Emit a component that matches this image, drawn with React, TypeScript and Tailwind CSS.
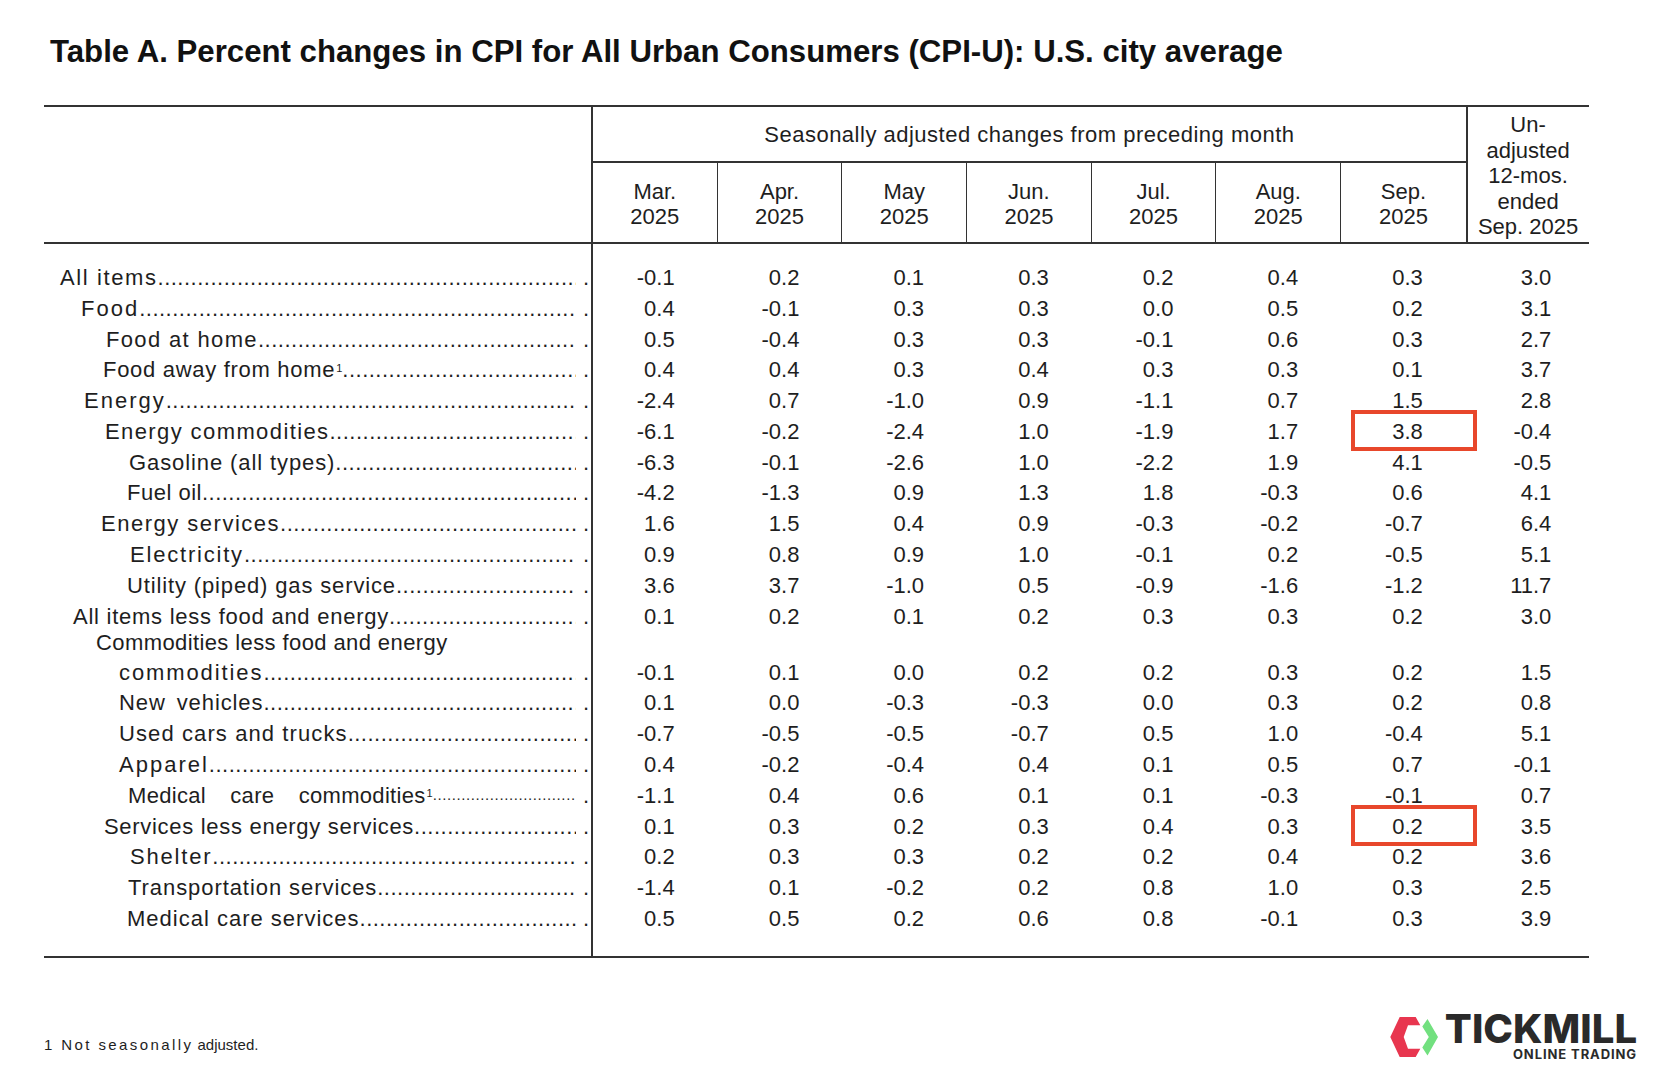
import React from "react";

type Row = {
    label: string;
    pad: string;
    track: string;
    sup?: boolean;
    extra?: string;
    vals: string[];
    box?: boolean;
};

const months = [["Mar.", "2025"], ["Apr.", "2025"], ["May", "2025"], ["Jun.", "2025"], ["Jul.", "2025"], ["Aug.", "2025"], ["Sep.", "2025"]];

const rowsTop: Row[] = [
    { label: "All items", pad: "pl-[16px]", track: "tracking-[1.6px]", vals: ["-0.1", "0.2", "0.1", "0.3", "0.2", "0.4", "0.3", "3.0"] },
    { label: "Food", pad: "pl-[37px]", track: "tracking-[2px]", vals: ["0.4", "-0.1", "0.3", "0.3", "0.0", "0.5", "0.2", "3.1"] },
    { label: "Food at home", pad: "pl-[62px]", track: "tracking-[1.35px]", vals: ["0.5", "-0.4", "0.3", "0.3", "-0.1", "0.6", "0.3", "2.7"] },
    { label: "Food away from home", pad: "pl-[59px]", track: "tracking-[0.7px]", sup: true, vals: ["0.4", "0.4", "0.3", "0.4", "0.3", "0.3", "0.1", "3.7"] },
    { label: "Energy", pad: "pl-[40px]", track: "tracking-[2px]", vals: ["-2.4", "0.7", "-1.0", "0.9", "-1.1", "0.7", "1.5", "2.8"] },
    { label: "Energy commodities", pad: "pl-[61px]", track: "tracking-[1.4px]", box: true, vals: ["-6.1", "-0.2", "-2.4", "1.0", "-1.9", "1.7", "3.8", "-0.4"] },
    { label: "Gasoline (all types)", pad: "pl-[85px]", track: "tracking-[0.9px]", vals: ["-6.3", "-0.1", "-2.6", "1.0", "-2.2", "1.9", "4.1", "-0.5"] },
    { label: "Fuel oil", pad: "pl-[83px]", track: "tracking-[0.5px]", vals: ["-4.2", "-1.3", "0.9", "1.3", "1.8", "-0.3", "0.6", "4.1"] },
    { label: "Energy services", pad: "pl-[57px]", track: "tracking-[1.5px]", vals: ["1.6", "1.5", "0.4", "0.9", "-0.3", "-0.2", "-0.7", "6.4"] },
    { label: "Electricity", pad: "pl-[86px]", track: "tracking-[1.8px]", vals: ["0.9", "0.8", "0.9", "1.0", "-0.1", "0.2", "-0.5", "5.1"] },
    { label: "Utility (piped) gas service", pad: "pl-[83px]", track: "tracking-[0.86px]", vals: ["3.6", "3.7", "-1.0", "0.5", "-0.9", "-1.6", "-1.2", "11.7"] },
    { label: "All items less food and energy", pad: "pl-[29px]", track: "tracking-[0.75px]", vals: ["0.1", "0.2", "0.1", "0.2", "0.3", "0.3", "0.2", "3.0"] },
];

const rowsBottom: Row[] = [
    { label: "New vehicles", pad: "pl-[75px]", track: "tracking-[0.9px]", extra: "[word-spacing:4px]", vals: ["0.1", "0.0", "-0.3", "-0.3", "0.0", "0.3", "0.2", "0.8"] },
    { label: "Used cars and trucks", pad: "pl-[75px]", track: "tracking-[1.1px]", vals: ["-0.7", "-0.5", "-0.5", "-0.7", "0.5", "1.0", "-0.4", "5.1"] },
    { label: "Apparel", pad: "pl-[75px]", track: "tracking-[2px]", vals: ["0.4", "-0.2", "-0.4", "0.4", "0.1", "0.5", "0.7", "-0.1"] },
    { label: "Medical care commodities", pad: "pl-[84px]", track: "tracking-[0.3px]", extra: "[word-spacing:18px]", sup: true, vals: ["-1.1", "0.4", "0.6", "0.1", "0.1", "-0.3", "-0.1", "0.7"] },
    { label: "Services less energy services", pad: "pl-[60px]", track: "tracking-[0.7px]", box: true, vals: ["0.1", "0.3", "0.2", "0.3", "0.4", "0.3", "0.2", "3.5"] },
    { label: "Shelter", pad: "pl-[86px]", track: "tracking-[1.8px]", vals: ["0.2", "0.3", "0.3", "0.2", "0.2", "0.4", "0.2", "3.6"] },
    { label: "Transportation services", pad: "pl-[84px]", track: "tracking-[0.93px]", vals: ["-1.4", "0.1", "-0.2", "0.2", "0.8", "1.0", "0.3", "2.5"] },
    { label: "Medical care services", pad: "pl-[83px]", track: "tracking-[1px]", vals: ["0.5", "0.5", "0.2", "0.6", "0.8", "-0.1", "0.3", "3.9"] },
];

const DOTS = ".".repeat(140);

function Leader({ small }: { small?: boolean }) {
    return (
        <>
            <span className={small ? "flex-1 overflow-hidden whitespace-nowrap text-[15px] tracking-[0.6px]" : "flex-1 overflow-hidden whitespace-nowrap tracking-[0.5px]"}>{DOTS}</span>
            <span className="ml-[7px]">.</span>
        </>
    );
}

function Values({ vals, box }: { vals: string[]; box?: boolean }) {
    return (
        <>
            {vals.slice(0, 7).map((v, i) => (
                <div key={i} className="relative w-[124.7px] pr-[43px] text-right">
                    {v}
                    {box && i === 6 && (
                        <span className="absolute left-[10px] top-[-5px] h-[41px] w-[126px] border-4 border-[#e8472b]" />
                    )}
                </div>
            ))}
            <div className="w-[122.5px] pr-[37px] text-right">{vals[7]}</div>
        </>
    );
}

function DataRow({ row }: { row: Row }) {
    return (
        <div className="flex h-[30.8px] items-center">
            <div className={`flex h-full w-[549px] items-center border-r-2 border-[#333] pr-[2px] ${row.pad}`}>
                <span className={`whitespace-nowrap ${row.track} ${row.extra ?? ""}`}>
                    {row.label}
                    {row.sup && <sup className="ml-[1px] text-[11px] tracking-normal">1</sup>}
                </span>
                <Leader small={row.label === "Medical care commodities"} />
            </div>
            <Values vals={row.vals} box={row.box} />
        </div>
    );
}

function TickmillLogo() {
    return (
        <div className="flex items-center">
            <svg width="52" height="44" viewBox="0 0 52 44">
                <polygon points="11.7,2 27.7,2 32.3,10.3 20,10.3 15.7,22 20,33.7 32.3,33.7 27.7,42 11.7,42 2.3,22" fill="#e8364f" />
                <polygon points="39.5,4 50,22 39.5,40.5 34.3,32.5 40.8,22 34.3,11.5" fill="#72e07f" />
            </svg>
            <div className="ml-[5px] flex flex-col items-end font-['Inter',sans-serif] text-[#2a2a2a]">
                <div className="text-[40px] font-extrabold leading-[32px]">TICKMILL</div>
                <div className="mt-[3px] text-[13px] font-bold leading-[13px] tracking-[0.9px]">ONLINE TRADING</div>
            </div>
        </div>
    );
}

export default function App() {
    return (
        <div className="h-[1070px] w-[1654px] overflow-hidden bg-white pl-[44px] pt-[34px] font-['Liberation_Sans',Arial,sans-serif] text-[#1e1e1e]">
            <h1 className="pl-[6px] text-[31.2px] font-bold leading-[36px] text-[#111]">
                Table A. Percent changes in CPI for All Urban Consumers (CPI-U): U.S. city average
            </h1>

            {/* table */}
            <div className="mt-[35px] w-[1545px] border-y-2 border-[#333] text-[22px]">
                {/* header */}
                <div className="grid grid-cols-[549px_repeat(7,124.7px)_122.5px] grid-rows-[56px_79px] border-b-2 border-[#333]">
                    <div className="row-span-2 border-r-2 border-[#333]" />
                    <div className="col-span-7 flex items-center justify-center border-b-2 border-[#333] tracking-[0.5px]">
                        Seasonally adjusted changes from preceding month
                    </div>
                    <div className="row-span-2 flex flex-col items-center justify-center border-l-2 border-[#333] pt-[3px] text-center leading-[25.5px]">
                        <span>Un-</span>
                        <span>adjusted</span>
                        <span>12-mos.</span>
                        <span>ended</span>
                        <span>Sep. 2025</span>
                    </div>
                    {months.map(([m, y], i) => (
                        <div key={m} className={i < 6 ? "flex flex-col items-center justify-center border-r border-[#333] pt-[2px] leading-[25px]" : "flex flex-col items-center justify-center pt-[2px] leading-[25px]"}>
                            <span>{m}</span>
                            <span>{y}</span>
                        </div>
                    ))}
                </div>

                {/* body */}
                <div className="flex h-[18px]"><div className="w-[549px] border-r-2 border-[#333]" /></div>
                {rowsTop.map((r) => <DataRow key={r.label} row={r} />)}

                <div className="flex h-[56px] items-end">
                    <div className="flex h-full w-[549px] flex-col justify-end border-r-2 border-[#333] pr-[2px]">
                        <div className="pl-[52px] leading-[28px] tracking-[0.4px]">Commodities less food and energy</div>
                        <div className="flex h-[30.8px] items-center pl-[75px]">
                            <span className="whitespace-nowrap tracking-[1.9px]">commodities</span>
                            <Leader />
                        </div>
                    </div>
                    <div className="flex h-[30.8px] items-center">
                        <Values vals={["-0.1", "0.1", "0.0", "0.2", "0.2", "0.3", "0.2", "1.5"]} />
                    </div>
                </div>

                {rowsBottom.map((r) => <DataRow key={r.label} row={r} />)}
                <div className="flex h-[22px]"><div className="w-[549px] border-r-2 border-[#333]" /></div>
            </div>

            {/* footer */}
            <div className="flex w-[1593px] items-start justify-between">
                <p className="mt-[78px] text-[15px] leading-[18px]">
                    1<span className="ml-[9px] tracking-[2.4px]">Not seasonally</span> adjusted.
                </p>
                <div className="mt-[55px]">
                    <TickmillLogo />
                </div>
            </div>
        </div>
    );
}
